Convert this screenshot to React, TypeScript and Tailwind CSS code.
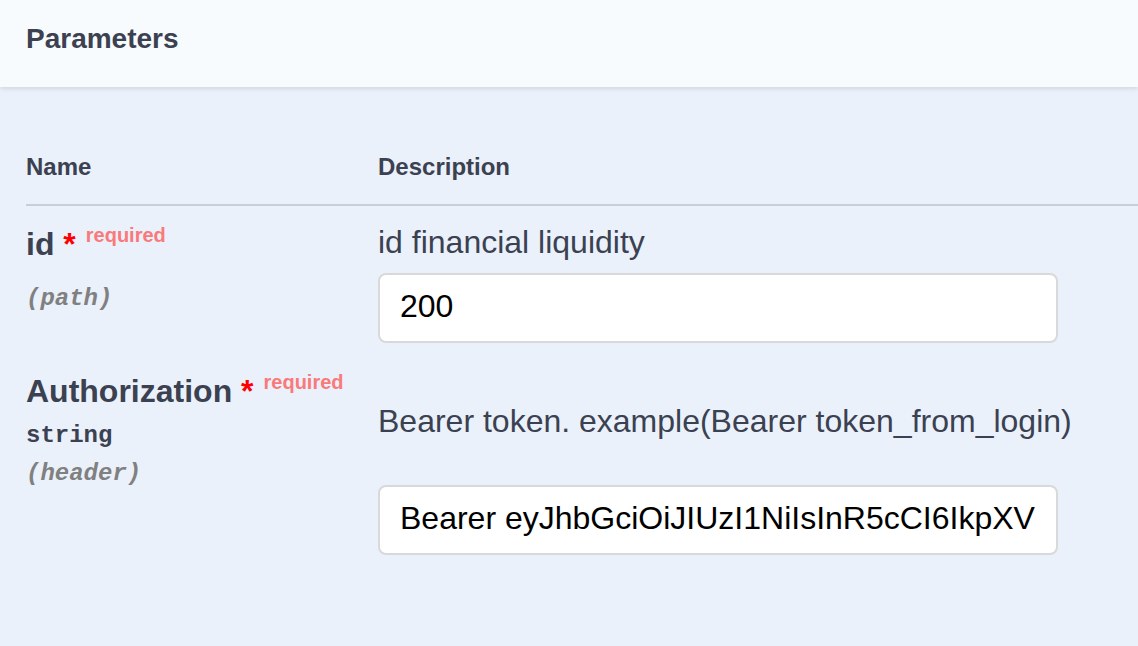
import React from 'react';

const sans = "font-['Liberation_Sans',Arial,sans-serif]";

function ParamName({ name, type, location, tight }: { name: string; type?: string; location: string; tight?: boolean }) {
  return (
    <div className={tight ? 'pt-[22px]' : 'pt-[32px]'}>
      <div className="text-[32px] leading-[32px] font-bold whitespace-nowrap">
        {name}
        <span className="text-[#ff0000]"> *</span>
        <span className="relative -top-[13px] ml-[10px] text-[20px] leading-[20px] font-bold text-[#f97a7a]">
          required
        </span>
      </div>
      {type && (
        <div className="mt-[17px] font-['Liberation_Mono',monospace] text-[24px] leading-[24px] font-bold">{type}</div>
      )}
      <div
        className={`${type ? 'mt-[14px]' : 'mt-[27px]'} font-['Liberation_Mono',monospace] text-[24px] leading-[24px] font-bold italic text-[#808080]`}
      >
        ({location})
      </div>
    </div>
  );
}

export default function App() {
  return (
    <div className={`w-[1138px] h-[646px] overflow-hidden bg-[#eaf1fa] text-[#3b4151] ${sans}`}>
      {/* section header */}
      <div className="relative z-10 h-[87px] bg-[#f8fbfe] pl-[26px] pt-[25px] shadow-[0_2px_4px_rgba(0,0,0,0.1)]">
        <h4 className="text-[28px] leading-[28px] font-bold">Parameters</h4>
      </div>

      <div className="pl-[26px]">
        {/* table head */}
        <div className="grid grid-cols-[352px_1fr] pt-[68px] pb-[25px] border-b-2 border-[#c7ced8] text-[24px] leading-[24px] font-bold">
          <div>Name</div>
          <div>Description</div>
        </div>

        {/* id row */}
        <div className="grid grid-cols-[352px_1fr]">
          <ParamName name="id" location="path" tight />
          <div className="pt-[20px]">
            <div className="text-[32px] leading-[32px]">id financial liquidity</div>
            <input
              readOnly
              defaultValue="200"
              className={`mt-[15px] w-[680px] h-[70px] px-[20px] pb-[4px] bg-white border-2 border-[#d9d9d9] rounded-[8px] text-[32px] text-black outline-none ${sans}`}
            />
          </div>
        </div>

        {/* Authorization row */}
        <div className="grid grid-cols-[352px_1fr]">
          <ParamName name="Authorization" type="string" location="header" />
          <div className="pt-[62px]">
            <div className="text-[32px] leading-[32px] whitespace-nowrap">Bearer token. example(Bearer token_from_login)</div>
            <input
              readOnly
              defaultValue="Bearer eyJhbGciOiJIUzI1NiIsInR5cCI6IkpXVCJ9.eyJzdWIiOiIxMjM0NTY3ODkwIn0"
              className={`mt-[48px] w-[680px] h-[70px] px-[20px] pb-[4px] bg-white border-2 border-[#d9d9d9] rounded-[8px] text-[32px] text-black outline-none ${sans}`}
            />
          </div>
        </div>
      </div>
    </div>
  );
}
